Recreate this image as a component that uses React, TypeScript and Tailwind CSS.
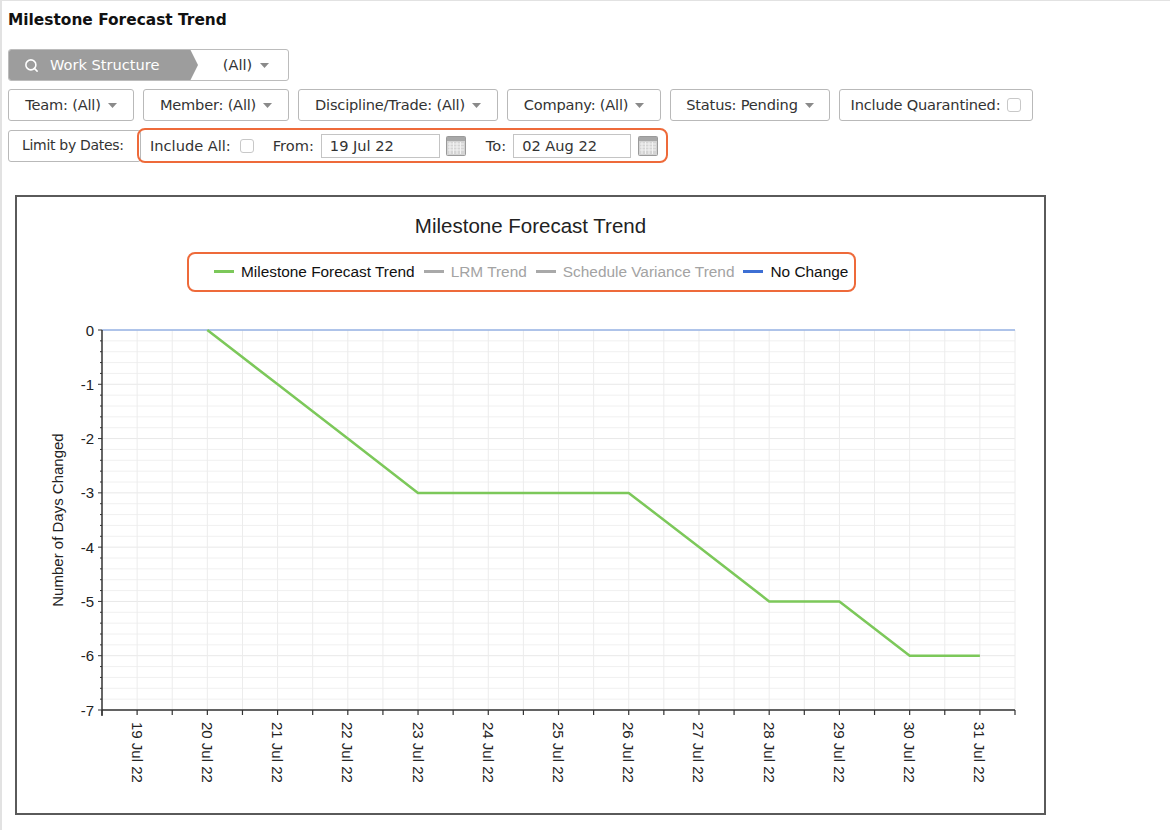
import React from 'react';
import { Search } from 'lucide-react';

const X0 = 85;
const X1 = 998;
const Y0 = 38;
const Y1 = 418;
const UNIT = (Y1 - Y0) / 7;
const DAY = (X1 - X0) / 13;

const xOf = (d: number) => X0 + (d - 18.5) * DAY;
const yOf = (v: number) => Y0 - v * UNIT;

const trend: [number, number][] = [
  [20, 0], [21, -1], [22, -2], [23, -3], [24, -3], [25, -3],
  [26, -3], [27, -4], [28, -5], [29, -5], [30, -6], [31, -6],
];

function Caret() {
  return (
    <svg width="9" height="5" viewBox="0 0 9 5" className="shrink-0">
      <path d="M0 0 L9 0 L4.5 5 Z" fill="#8a8a8a" />
    </svg>
  );
}

function Checkbox() {
  return <span className="inline-block h-[14px] w-[14px] rounded-[3px] border border-[#c8c8c8] bg-white" />;
}

function CalendarIcon() {
  return (
    <svg width="20" height="20" viewBox="0 0 20 20" className="shrink-0">
      <rect x="0.5" y="0.5" width="19" height="19" rx="1" fill="#d4d4d4" stroke="#9a9a9a" />
      <rect x="1" y="1" width="18" height="4" fill="#a8a8a8" />
      {[4, 7.5, 11, 14.5].map((x) => (
        <line key={'v' + x} x1={x} y1="6" x2={x} y2="18" stroke="#f2f2f2" strokeWidth="1" />
      ))}
      {[8, 11, 14].map((y) => (
        <line key={'h' + y} x1="2" y1={y} x2="18" y2={y} stroke="#f2f2f2" strokeWidth="1" />
      ))}
    </svg>
  );
}

function FilterButton({ label, value, width, children }: { label: string; value?: string; width: string; children?: React.ReactNode }) {
  return (
    <div className={`flex h-[32px] shrink-0 items-center justify-center gap-[7px] whitespace-nowrap rounded-[3px] border border-[#b9b9b9] bg-white text-[14.6px] tracking-[-0.2px] text-[#333] ${width}`}>
      <span className="whitespace-pre">
        {label}
        {value !== undefined && ' ' + value}
      </span>
      {children ?? <Caret />}
    </div>
  );
}

function DateInput({ value, width }: { value: string; width: string }) {
  return (
    <div className={`flex h-[24px] items-center border border-[#c4c4c4] bg-white pl-[8px] text-[14.6px] text-[#333] ${width}`}>
      {value}
    </div>
  );
}

function Legend() {
  const items = [
    { name: 'Milestone Forecast Trend', color: '#7cc85a', text: 'text-[#111]' },
    { name: 'LRM Trend', color: '#a9a9a9', text: 'text-[#a3a3a3]' },
    { name: 'Schedule Variance Trend', color: '#a9a9a9', text: 'text-[#a3a3a3]' },
    { name: 'No Change', color: '#3d6fd4', text: 'text-[#111]' },
  ];
  return (
    <div className="ml-[170px] mt-[14px] flex h-[40px] w-[669px] items-center gap-[9px] rounded-[8px] border-2 border-[#ee6a3a] pl-[25px] text-[15.4px]">
      {items.map((it) => (
        <div key={it.name} className="flex items-center gap-[7px]">
          <span className="inline-block h-[3px] w-[20px]" style={{ background: it.color }} />
          <span className={it.text}>{it.name}</span>
        </div>
      ))}
    </div>
  );
}

function Plot() {
  const hLines = Array.from({ length: 36 }, (_, i) => Y0 + (i * UNIT) / 5);
  const vTicks = Array.from({ length: 27 }, (_, k) => X0 + (k * DAY) / 2);
  const days = Array.from({ length: 13 }, (_, i) => 19 + i);
  const pts = trend.map(([d, v]) => `${xOf(d).toFixed(1)},${yOf(v).toFixed(1)}`).join(' ');

  return (
    <svg width="1027" height="521" viewBox="0 0 1027 521" className="block" style={{ fontFamily: '"Liberation Sans", Arial, sans-serif' }}>
      {hLines.map((y, i) => (
        <line key={'h' + i} x1={X0} y1={y} x2={X1} y2={y} stroke={i % 5 === 0 ? '#e8e8e8' : '#f0f0f0'} strokeWidth="1" />
      ))}
      {vTicks.slice(1).map((x, k) => (
        <line key={'v' + k} x1={x} y1={Y0} x2={x} y2={Y1} stroke="#ececec" strokeWidth="1" />
      ))}

      {/* No change baseline */}
      <line x1={X0} y1={Y0} x2={X1} y2={Y0} stroke="#6b93e0" strokeWidth="1.2" />

      {/* trend */}
      <polyline points={pts} fill="none" stroke="#7cc85a" strokeWidth="2.5" strokeLinejoin="round" />

      {/* axes */}
      <line x1={X0} y1={Y0} x2={X0} y2={Y1 + 6} stroke="#333" strokeWidth="1.5" />
      <line x1={X0} y1={Y1} x2={X1} y2={Y1} stroke="#333" strokeWidth="1.5" />
      {hLines.map((y, i) => (
        <line key={'yt' + i} x1={i % 5 === 0 ? X0 - 4 : X0 - 2} y1={y} x2={X0} y2={y} stroke="#333" strokeWidth="1" />
      ))}
      {vTicks.map((x, k) => (
        <line key={'xt' + k} x1={x} y1={Y1} x2={x} y2={Y1 + 5} stroke="#333" strokeWidth="1.2" />
      ))}

      {Array.from({ length: 8 }, (_, i) => (
        <text key={'yl' + i} x={X0 - 8} y={yOf(-i)} textAnchor="end" dominantBaseline="central" fontSize="15" fill="#222">
          {i === 0 ? '0' : `-${i}`}
        </text>
      ))}

      {days.map((d) => (
        <text
          key={'xl' + d}
          transform={`translate(${xOf(d)}, ${Y1 + 12}) rotate(90)`}
          textAnchor="start"
          dominantBaseline="central"
          fontSize="15"
          fill="#222"
        >
          {`${d} Jul 22`}
        </text>
      ))}

      <text transform="translate(40, 228) rotate(-90)" textAnchor="middle" dominantBaseline="central" fontSize="15" fill="#222">
        Number of Days Changed
      </text>
    </svg>
  );
}

export default function App() {
  return (
    <div className="min-h-[830px] w-[1170px] border-l-2 border-t border-[#e2e2e2] bg-white pl-[6px]" style={{ fontFamily: '"DejaVu Sans", Verdana, sans-serif' }}>
      <h1 className="pt-[9px] text-[15.4px] font-bold leading-[20px] text-[#111]">Milestone Forecast Trend</h1>

      <div className="mt-[19px] flex h-[32px] w-[281px] overflow-hidden rounded-[3px] border border-[#bcbcbc] text-[14.6px]">
        <div className="-my-px -ml-px flex w-[190px] items-center gap-[11px] bg-[#9d9d9d] pl-[16px] text-white [clip-path:polygon(0_0,182px_0,190px_50%,182px_100%,0_100%)]">
          <Search size={15} strokeWidth={2.5} />
          <span>Work Structure</span>
        </div>
        <div className="flex flex-1 items-center justify-center gap-[8px] pl-[6px] text-[#333]">
          <span>(All)</span>
          <Caret />
        </div>
      </div>

      <div className="mt-[8px] flex gap-[9px]">
        <FilterButton label="Team:" value="(All)" width="w-[126px]" />
        <FilterButton label="Member:" value="(All)" width="w-[146px]" />
        <FilterButton label="Discipline/Trade:" value="(All)" width="w-[200px]" />
        <FilterButton label="Company:" value="(All)" width="w-[154px]" />
        <FilterButton label="Status:" value="Pending" width="w-[160px]" />
        <FilterButton label="Include Quarantined:" width="w-[194px]">
          <Checkbox />
        </FilterButton>
      </div>

      <div className="mt-[7px] flex items-center">
        <div className="flex h-[32px] w-[133px] shrink-0 items-center whitespace-nowrap rounded-[3px] border border-[#b9b9b9] bg-white pl-[13px] text-[14px] tracking-[-0.3px] text-[#333]">
          Limit by Dates:
        </div>
        <div className="-ml-[4px] flex h-[35px] items-center whitespace-nowrap rounded-[8px] border-2 border-[#ee6a3a] pl-[11px] pr-[8px] text-[14.6px] text-[#333]">
          <span>Include All:</span>
          <span className="ml-[9px] flex"><Checkbox /></span>
          <span className="ml-[19px]">From:</span>
          <span className="ml-[7px]"><DateInput value="19 Jul 22" width="w-[119px]" /></span>
          <span className="ml-[6px] flex"><CalendarIcon /></span>
          <span className="ml-[20px]">To:</span>
          <span className="ml-[7px]"><DateInput value="02 Aug 22" width="w-[118px]" /></span>
          <span className="ml-[7px] flex"><CalendarIcon /></span>
        </div>
      </div>

      <div className="ml-[7px] mt-[32px] h-[620px] w-[1031px] border-2 border-[#5a5a5a] bg-white" style={{ fontFamily: '"Liberation Sans", Arial, sans-serif' }}>
        <div className="pt-[17px] text-center text-[20.5px] leading-[24px] text-[#222]">Milestone Forecast Trend</div>
        <Legend />
        <Plot />
      </div>
    </div>
  );
}
